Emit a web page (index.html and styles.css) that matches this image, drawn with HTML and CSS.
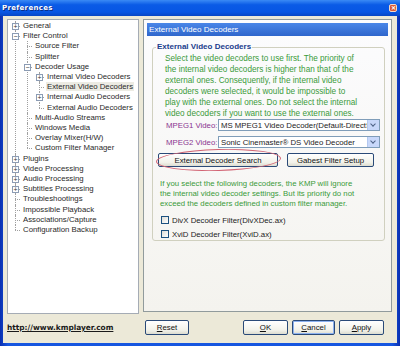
FILE: index.html
```html
<!DOCTYPE html>
<html lang="en">
<head>
    <meta charset="UTF-8">
    <title>Preferences</title>
    <link rel="stylesheet" href="styles.css">
</head>
<body>

    <div class="window">
        <div class="titlebar">
            <span class="title">Preferences</span>
            <span class="close">&#x2715;</span>
        </div>

        <div class="client">
            <div class="main">
                <div class="tree">
                    <ul class="root">
                        <li class="closed"><span class="exp">+</span><span class="label">General</span></li>
                        <li><span class="exp">&minus;</span><span class="label">Filter Control</span>
                            <ul>
                                <li><span class="label">Source Filter</span></li>
                                <li><span class="label">Splitter</span></li>
                                <li><span class="exp">&minus;</span><span class="label">Decoder Usage</span>
                                    <ul>
                                        <li><span class="exp">+</span><span class="label">Internal Video Decoders</span></li>
                                        <li><span class="label selected">External Video Decoders</span></li>
                                        <li><span class="exp">+</span><span class="label">Internal Audio Decoders</span></li>
                                        <li><span class="label">External Audio Decoders</span></li>
                                    </ul>
                                </li>
                                <li><span class="label">Multi-Audio Streams</span></li>
                                <li><span class="label">Windows Media</span></li>
                                <li><span class="label">Overlay Mixer(H/W)</span></li>
                                <li><span class="label">Custom Filter Manager</span></li>
                            </ul>
                        </li>
                        <li><span class="exp">+</span><span class="label">Plugins</span></li>
                        <li><span class="exp">+</span><span class="label">Video Processing</span></li>
                        <li><span class="exp">+</span><span class="label">Audio Processing</span></li>
                        <li><span class="exp">+</span><span class="label">Subtitles Processing</span></li>
                        <li><span class="label">Troubleshootings</span></li>
                        <li><span class="label">Impossible Playback</span></li>
                        <li><span class="label">Associations/Capture</span></li>
                        <li><span class="label">Configuration Backup</span></li>
                    </ul>
                </div>

                <div class="panel">
                    <div class="panel-head">External Video Decoders</div>

                    <fieldset class="group">
                        <legend>External Video Decoders</legend>

                        <p class="note intro">
                            Select the video decoders to use first. The priority of<br>
                            the internal video decoders is higher than that of the<br>
                            external ones. Consequently, if the internal video<br>
                            decoders were selected, it would be impossible to<br>
                            play with the external ones. Do not select the internal<br>
                            video decoders if you want to use the external ones.
                        </p>

                        <div class="field">
                            <label>MPEG1 Video:</label>
                            <div class="combo"><span class="value">MS MPEG1 Video Decoder(Default-DirectShow)</span><span class="drop"></span></div>
                        </div>
                        <div class="field">
                            <label>MPEG2 Video:</label>
                            <div class="combo"><span class="value">Sonic Cinemaster&reg; DS Video Decoder</span><span class="drop"></span></div>
                        </div>

                        <div class="actions">
                            <div class="marked">
                                <button class="btn search">External Decoder Search</button>
                                <span class="ring"></span>
                            </div>
                            <button class="btn gabest">Gabest Filter Setup</button>
                        </div>

                        <p class="note extra">
                            If you select the following decoders, the KMP will ignore<br>
                            the internal video decoder settings. But its priority do not<br>
                            exceed the decoders defined in custom filter manager.
                        </p>

                        <label class="check"><span class="box"></span>DivX Decoder Filter(DivXDec.ax)</label>
                        <label class="check"><span class="box"></span>XviD Decoder Filter(XviD.ax)</label>
                    </fieldset>
                </div>
            </div>

            <div class="footer">
                <div class="link-wrap"><a class="site" href="#">http://www.kmplayer.com</a></div>
                <button class="btn small"><u>R</u>eset</button>
                <div class="spacer"></div>
                <button class="btn small"><u>O</u>K</button>
                <button class="btn small default"><u>C</u>ancel</button>
                <button class="btn small"><u>A</u>pply</button>
            </div>
        </div>
    </div>

</body>
</html>
```

FILE: styles.css
```css
body {
    margin: 0;
    padding: 0;
    font-family: 'Liberation Sans', Arial, sans-serif;
    font-size: 7.8px;
    color: #1c1c1c;
    background: #0a3fc8;
}

.window {
    width: 400px;
    height: 346px;
    box-sizing: border-box;
    display: flex;
    flex-direction: column;
    background: linear-gradient(90deg, #0a2fb0, #1656e0 2%, #1656e0 98%, #0a2fb0);
    overflow: hidden;
}

.titlebar {
    height: 16px;
    flex: none;
    display: flex;
    align-items: center;
    justify-content: space-between;
    padding: 0 3px 0 2px;
    background: linear-gradient(#3a8af5, #0a5be6 30%, #0756e4 75%, #0746c4);
}

.title {
    color: #fff;
    font-family: 'DejaVu Sans', sans-serif;
    font-weight: bold;
    font-size: 7px;
    letter-spacing: 0.3px;
    text-shadow: 1px 1px 0 #0a2a80;
}

.close {
    width: 8px;
    height: 8px;
    box-sizing: border-box;
    border: 1px solid #f4d8c8;
    border-radius: 2px;
    background: #d85a36;
    color: #fff;
    font-size: 6px;
    line-height: 6px;
    text-align: center;
    font-weight: bold;
    margin-top: -1px;
}

.client {
    flex: 1;
    margin: 0 3px 3px 3px;
    background: #ece9d8;
    display: flex;
    flex-direction: column;
    padding: 3px 0 0 0;
}

.main {
    display: flex;
    gap: 4px;
    padding-left: 4px;
}

/* tree */

.tree {
    width: 132px;
    height: 295px;
    box-sizing: border-box;
    background: #fff;
    border: 1px solid #a5acb5;
    padding-top: 1px;
    overflow: hidden;
}

.tree ul {
    list-style: none;
    margin: 0;
    padding: 0;
}

.tree ul.root {
    margin-left: 7px;
}

.tree li {
    position: relative;
    padding-left: 7px;
    line-height: 10.2px;
    white-space: nowrap;
    color: #2a2a2a;
}

.tree li ul {
    margin-left: 5px;
}

.tree li::before {
    content: '';
    position: absolute;
    left: 0;
    top: 5px;
    width: 5px;
    border-top: 1px dotted #a0a0a0;
}

.tree li::after {
    content: '';
    position: absolute;
    left: 0;
    top: 0;
    bottom: 0;
    border-left: 1px dotted #a0a0a0;
}

.tree li:last-child::after {
    bottom: auto;
    height: 5px;
}

.tree .exp {
    position: absolute;
    left: -3px;
    top: 2px;
    width: 7px;
    height: 7px;
    box-sizing: border-box;
    border: 1px solid #8c9cb4;
    background: #fff;
    font-size: 7px;
    line-height: 5px;
    text-align: center;
    color: #333;
    z-index: 1;
}

.tree .label {
    padding: 0 1px;
}

.tree .selected {
    background: #ecebe3;
}

/* right panel */

.panel {
    width: 249px;
    height: 293px;
    box-sizing: border-box;
    border: 1px solid #919b9c;
    background: linear-gradient(#fcfcfe, #f4f3ee);
    padding: 3px;
}

.panel-head {
    height: 13px;
    line-height: 13px;
    background: linear-gradient(#4a86e8, #2f66cc);
    color: #fff;
    padding-left: 2px;
    font-size: 8.1px;
}

.group {
    margin: 6px 3px 0 5px;
    padding: 0 0 6px 0;
    height: 199px;
    box-sizing: border-box;
    border: 1px solid #d0d0bf;
    border-radius: 3px;
}

.group legend {
    margin-left: 3px;
    padding: 0 1px;
    font-weight: bold;
    color: #1a3c8c;
    font-size: 8px;
    line-height: 10px;
}

.note {
    margin: 0;
    color: #3a9a3a;
    white-space: nowrap;
}

.intro {
    padding-left: 12px;
    line-height: 11px;
    font-size: 8.2px;
    margin-top: 1px;
}

.field {
    display: flex;
    align-items: center;
    margin-top: 5px;
    padding-left: 13px;
}

.field:first-of-type {
    margin-top: 0;
}

.field label {
    width: 52px;
    flex: none;
    white-space: nowrap;
    color: #8a3590;
}

.combo {
    width: 162px;
    height: 12px;
    box-sizing: border-box;
    border: 1px solid #7f9db9;
    background: #fff;
    display: flex;
    align-items: center;
    overflow: hidden;
}

.combo .value {
    flex: 1;
    padding-left: 2px;
    white-space: nowrap;
    overflow: hidden;
}

.combo .drop {
    width: 11px;
    height: 10px;
    flex: none;
    background: #c8d8fa;
    border-left: 1px solid #b4c8f0;
    position: relative;
}

.combo .drop::after {
    content: '';
    position: absolute;
    left: 3px;
    top: 2px;
    width: 3px;
    height: 3px;
    border-right: 1.5px solid #4d6185;
    border-bottom: 1.5px solid #4d6185;
    transform: rotate(45deg);
}

.actions {
    display: flex;
    gap: 9px;
    margin-top: 5px;
    padding-left: 5px;
}

.btn {
    font-family: 'Liberation Sans', Arial, sans-serif;
    font-size: 7.8px;
    color: #111;
    height: 14px;
    padding: 0;
    border: 1px solid #2a4a78;
    border-radius: 2px;
    background: linear-gradient(#ffffff, #f2f2ea 70%, #dcdcd0);
    box-sizing: border-box;
}

.marked {
    position: relative;
}

.search {
    width: 120px;
}

.gabest {
    width: 87px;
}

.ring {
    position: absolute;
    left: -2px;
    top: -4px;
    width: 125px;
    height: 22px;
    box-sizing: border-box;
    border: 1px solid #d26474;
    border-radius: 50%;
    transform: rotate(-1.5deg);
}

.extra {
    padding-left: 7px;
    margin-top: 12px;
    line-height: 10px;
}

.check {
    display: flex;
    align-items: center;
    gap: 3px;
    padding-left: 8px;
    height: 14px;
}

.extra + .check {
    margin-top: 4px;
}

.check .box {
    width: 8px;
    height: 8px;
    box-sizing: border-box;
    border: 1px solid #1c5180;
    background: linear-gradient(135deg, #dcdcd6, #fff);
}

/* footer */

.footer {
    display: flex;
    align-items: center;
    padding: 6px 13px 0 4px;
}

.link-wrap {
    width: 138px;
}

.site {
    color: #1a1a1a;
    font-family: 'DejaVu Sans', sans-serif;
    font-weight: bold;
    font-size: 7.4px;
    text-decoration: underline;
}

.spacer {
    flex: 1;
}

.btn.small {
    width: 45px;
    height: 15px;
    margin-left: 4px;
}

.link-wrap + .btn.small {
    width: 44px;
    margin-left: 0;
}

.btn.default {
    width: 43px;
    border-color: #2a4a78;
    box-shadow: inset 0 0 0 1px #8db2f0;
}
```
